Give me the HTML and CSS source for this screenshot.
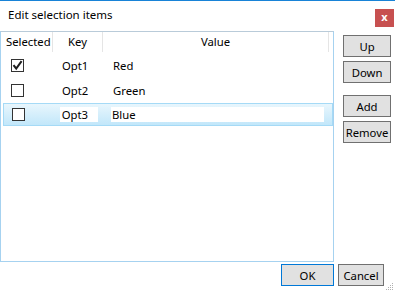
FILE: index.html
```html
<!DOCTYPE html>
<html lang="en">
<head>
    <meta charset="UTF-8">
    <title>Edit selection items</title>
    <link rel="stylesheet" href="styles.css">
</head>
<body>
    <div class="dialog">
        <div class="titlebar">
            <div class="title">Edit selection items</div>
            <div class="close">x</div>
        </div>

        <div class="content">
            <div class="listbox">
                <div class="header">
                    <div class="col col-sel">Selected</div>
                    <div class="col col-key">Key</div>
                    <div class="col col-val">Value</div>
                    <div class="col col-fill"></div>
                </div>

                <div class="row">
                    <div class="cell cell-sel">
                        <span class="check">
                            <svg width="11" height="11" viewBox="0 0 11 11"><path d="M1.5 5.2 L4.2 8.5 L9.6 1.2" fill="none" stroke="#1e1e1e" stroke-width="2"/></svg>
                        </span>
                    </div>
                    <div class="cell cell-key"><span class="text">Opt1</span></div>
                    <div class="cell cell-val"><span class="text">Red</span></div>
                </div>

                <div class="row">
                    <div class="cell cell-sel"><span class="check"></span></div>
                    <div class="cell cell-key"><span class="text">Opt2</span></div>
                    <div class="cell cell-val"><span class="text">Green</span></div>
                </div>

                <div class="row selected">
                    <div class="cell cell-sel"><span class="check"></span></div>
                    <div class="cell cell-key"><span class="text edit">Opt3</span></div>
                    <div class="cell cell-val"><span class="text edit wide">Blue</span></div>
                </div>
            </div>

            <div class="side">
                <button class="btn">Up</button>
                <button class="btn">Down</button>
                <button class="btn gap">Add</button>
                <button class="btn">Remove</button>
            </div>
        </div>

        <div class="footer">
            <button class="btn btn-ok">OK</button>
            <button class="btn btn-cancel">Cancel</button>
        </div>

        <svg class="grip" width="10" height="10" viewBox="0 0 10 10">
            <rect x="8" y="2" width="1" height="1" fill="#b0b0b0"/>
            <rect x="6" y="4" width="1" height="1" fill="#b0b0b0"/>
            <rect x="8" y="4" width="1" height="1" fill="#b0b0b0"/>
            <rect x="4" y="6" width="1" height="1" fill="#b0b0b0"/>
            <rect x="6" y="6" width="1" height="1" fill="#b0b0b0"/>
            <rect x="8" y="6" width="1" height="1" fill="#b0b0b0"/>
            <rect x="2" y="8" width="1" height="1" fill="#b0b0b0"/>
            <rect x="4" y="8" width="1" height="1" fill="#b0b0b0"/>
            <rect x="6" y="8" width="1" height="1" fill="#b0b0b0"/>
            <rect x="8" y="8" width="1" height="1" fill="#b0b0b0"/>
        </svg>
    </div>
</body>
</html>
```

FILE: styles.css
```css
body {
    margin: 0;
    padding: 0;
    background: #ffffff;
    font-family: "Noto Sans", "Open Sans", sans-serif;
    font-size: 11.3px;
    color: #000;
}

.dialog {
    position: relative;
    width: 395px;
    height: 292px;
    display: flex;
    flex-direction: column;
    box-sizing: border-box;
    border-top: 1px solid #1883d7;
}

/* Title bar */
.titlebar {
    height: 30px;
    display: flex;
    justify-content: space-between;
    align-items: flex-start;
}

.title {
    padding-left: 8px;
    padding-top: 6px;
    font-size: 11.5px;
}

.close {
    width: 19px;
    height: 18px;
    margin-top: 8px;
    margin-right: 1px;
    background: #c75050;
    color: #fff;
    font-weight: bold;
    font-size: 11px;
    line-height: 16px;
    text-align: center;
}

/* Main area */
.content {
    display: flex;
    height: 231px;
}

.listbox {
    width: 334px;
    height: 231px;
    box-sizing: border-box;
    border: 1px solid #a6d2f0;
    border-top-color: #b9cbd9;
}

.header {
    display: flex;
    height: 20px;
}

.col {
    box-sizing: border-box;
    border-right: 1px solid #e5e5e5;
    line-height: 20px;
    color: #000;
}

.col-sel {
    width: 52px;
    padding-left: 5px;
}

.col-key {
    width: 50px;
    text-align: center;
}

.col-val {
    width: 226px;
    text-align: center;
}

.col-fill {
    width: 4px;
    border-right: none;
}

.row {
    display: flex;
    align-items: center;
    height: 25px;
    box-sizing: border-box;
    padding-top: 1px;
}

.row.selected {
    margin: 1px 0 0 2px;
    width: 330px;
    height: 23px;
    padding-top: 0;
    border: 1px solid #a5daf6;
    background: linear-gradient(#e8f6fd, #c2e7fa);
}

.cell {
    display: flex;
    align-items: center;
}

.cell-sel {
    width: 52px;
    padding-left: 10px;
    box-sizing: border-box;
}

.check {
    width: 11px;
    height: 11px;
    border: 1px solid #333;
    background: #fff;
    display: flex;
    align-items: center;
    justify-content: center;
}

.cell-key {
    width: 58px;
    padding-left: 7px;
    box-sizing: border-box;
}

.cell-val {
    flex: 1;
}

.text {
    padding-left: 2px;
}

.edit {
    background: #fff;
    width: 36px;
    height: 15px;
    line-height: 15px;
}

.edit.wide {
    width: 212px;
    padding-left: 1px;
}

.selected .cell-sel {
    padding-left: 8px;
}

.selected .cell-key {
    padding-left: 5px;
}

.selected .cell-val {
    padding-right: 8px;
}

/* Buttons */
.side {
    display: flex;
    flex-direction: column;
    gap: 4px;
    margin-left: 9px;
    padding-top: 4px;
}

.btn {
    width: 48px;
    height: 22px;
    padding: 0;
    font-family: "Noto Sans", "Open Sans", sans-serif;
    font-size: 11.3px;
    color: #000;
    background: #e1e1e1;
    border: 1px solid #707070;
    border-radius: 0;
    white-space: nowrap;
}

.btn.gap {
    margin-top: 8px;
}

.footer {
    display: flex;
    justify-content: flex-end;
    gap: 4px;
    padding-top: 2px;
    padding-right: 11px;
}

.btn-ok {
    width: 53px;
    border-color: #0078d7;
}

.btn-cancel {
    width: 46px;
}

.grip {
    position: absolute;
    right: 1px;
    bottom: 1px;
}
```
